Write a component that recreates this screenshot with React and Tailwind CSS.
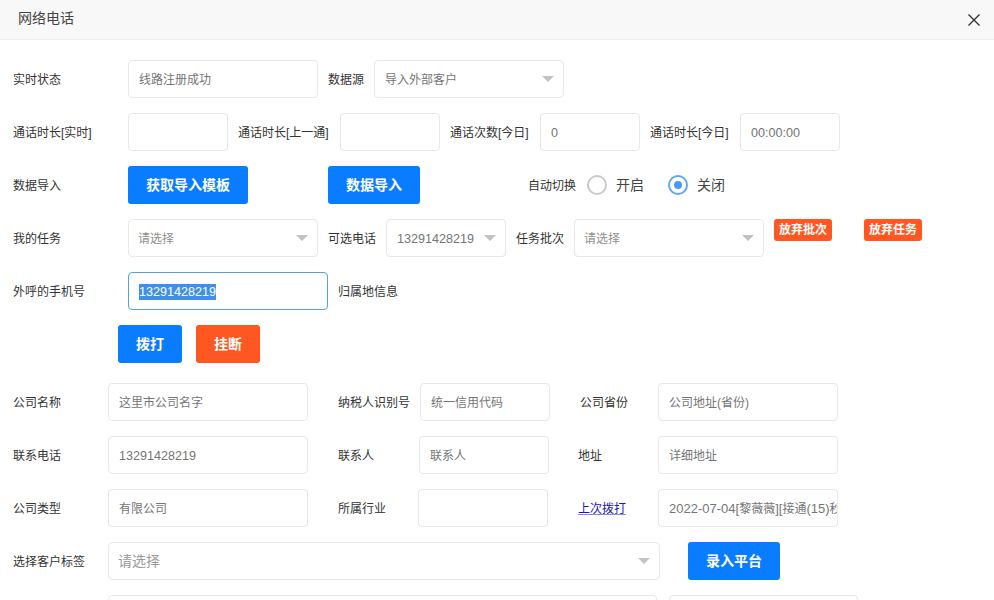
const font = "[font-family:'Liberation_Sans','Noto_Sans_CJK_SC',sans-serif]";

function Label({ className = "", children }) {
  return <div className={`h-[38px] shrink-0 text-xs leading-[40px] ${className}`}>{children}</div>;
}

function Field({ className = "", children }) {
  return (
    <div className={`h-[38px] shrink-0 overflow-hidden whitespace-nowrap rounded-[4px] border border-[#e8e8e8] pl-[10px] text-xs leading-[38px] text-[#757575] ${className}`}>
      {children}
    </div>
  );
}

function Digits({ children }) {
  return <span className="text-[12.6px]">{children}</span>;
}

function Select({ className = "", children }) {
  return (
    <div className={`relative h-[38px] shrink-0 rounded-[4px] border border-[#e8e8e8] ${className}`}>
      {children}
      <span className="absolute right-[9px] top-[15px] h-0 w-0 border-x-[6px] border-t-[6px] border-x-transparent border-t-[#c2c2c2]" />
    </div>
  );
}

function Button({ className = "", children }) {
  return (
    <div className={`flex h-[38px] shrink-0 items-center justify-center rounded-[3px] text-sm font-bold text-white ${className}`}>
      {children}
    </div>
  );
}

function Badge({ className = "", children }) {
  return (
    <div className={`flex h-[22px] w-[58px] shrink-0 items-center justify-center rounded-[3px] bg-[#ff5722] text-xs font-bold text-white ${className}`}>
      {children}
    </div>
  );
}

function Radio({ checked, children, className = "" }) {
  return (
    <div className={`flex shrink-0 items-center ${className}`}>
      <span className={`flex h-5 w-5 items-center justify-center rounded-full border-2 ${checked ? "border-[#5fa8f5]" : "border-[#c9c9c9]"}`}>
        {checked && <span className="h-2 w-2 rounded-full bg-[#4a9bf5]" />}
      </span>
      <span className="ml-[9px] text-sm text-[#444]">{children}</span>
    </div>
  );
}

export default function App() {
  return (
    <div className={`h-[600px] w-[994px] overflow-hidden bg-white text-[#333] ${font}`}>
      <header className="flex h-10 items-center justify-between border-b border-[#eee] bg-[#f8f8f8] pl-[18px] pr-[13px]">
        <span className="pb-[3px] text-sm text-[#444]">网络电话</span>
        <svg width="14" height="14" viewBox="0 0 14 14" fill="none" stroke="#333" strokeWidth="1.4">
          <path d="M1.5 1.5 12.5 12.5M12.5 1.5 1.5 12.5" />
        </svg>
      </header>

      <div className="flex flex-col gap-[15px] pl-[13px] pt-5">
        <div className="flex">
          <Label className="w-[115px]">实时状态</Label>
          <Field className="w-[190px]">线路注册成功</Field>
          <Label className="ml-[10px] w-[46px]">数据源</Label>
          <Select className="w-[190px] pl-[10px] text-xs leading-[38px] text-[#757575]">导入外部客户</Select>
        </div>

        <div className="flex">
          <Label className="w-[115px]">通话时长[实时]</Label>
          <Field className="w-[100px]" />
          <Label className="ml-[10px] w-[102px]">通话时长[上一通]</Label>
          <Field className="w-[100px]" />
          <Label className="ml-[10px] w-[90px]">通话次数[今日]</Label>
          <Field className="w-[100px]"><Digits>0</Digits></Field>
          <Label className="ml-[10px] w-[90px]">通话时长[今日]</Label>
          <Field className="w-[100px]"><Digits>00:00:00</Digits></Field>
        </div>

        <div className="flex">
          <Label className="w-[115px]">数据导入</Label>
          <Button className="w-[120px] bg-[#0a7cff]">获取导入模板</Button>
          <Button className="ml-20 w-[92px] bg-[#0a7cff]">数据导入</Button>
          <Label className="ml-[108px] w-[59px]">自动切换</Label>
          <Radio className="w-[81px]">开启</Radio>
          <Radio checked>关闭</Radio>
        </div>

        <div className="flex">
          <Label className="w-[115px]">我的任务</Label>
          <Select className="w-[190px] pl-[9px] text-xs leading-[38px] text-[#8f8f8f]">请选择</Select>
          <Label className="ml-[10px] w-[48px]">可选电话</Label>
          <Select className="ml-[10px] w-[120px] pl-[10px] text-xs leading-[38px] text-[#757575]"><Digits>13291428219</Digits></Select>
          <Label className="ml-[10px] w-[58px]">任务批次</Label>
          <Select className="w-[190px] pl-[9px] text-xs leading-[38px] text-[#8f8f8f]">请选择</Select>
          <Badge className="ml-[10px]">放弃批次</Badge>
          <Badge className="ml-8">放弃任务</Badge>
        </div>

        <div className="flex">
          <Label className="w-[115px]">外呼的手机号</Label>
          <div className="h-[38px] w-[200px] shrink-0 rounded-[4px] border border-[#5a9fd8] pl-[10px] text-[12.6px] leading-[38px] text-white">
            <span className="bg-[#3f8fe8] py-[1px]">13291428219</span>
          </div>
          <Label className="ml-[10px]">归属地信息</Label>
        </div>

        <div className="ml-[105px] flex gap-[14px]">
          <Button className="w-16 bg-[#0a7cff]">拨打</Button>
          <Button className="w-16 bg-[#ff5722]">挂断</Button>
        </div>

        <div className="mt-[5px] flex">
          <Label className="w-[95px]">公司名称</Label>
          <Field className="w-[200px]">这里市公司名字</Field>
          <Label className="ml-[30px] w-[82px]">纳税人识别号</Label>
          <Field className="w-[130px]">统一信用代码</Field>
          <Label className="ml-[30px] w-[78px]">公司省份</Label>
          <Field className="w-[180px]">公司地址(省份)</Field>
        </div>

        <div className="flex">
          <Label className="w-[95px]">联系电话</Label>
          <Field className="w-[200px]"><Digits>13291428219</Digits></Field>
          <Label className="ml-[30px] w-[81px]">联系人</Label>
          <Field className="w-[130px]">联系人</Field>
          <Label className="ml-[29px] w-[80px]">地址</Label>
          <Field className="w-[180px]">详细地址</Field>
        </div>

        <div className="flex">
          <Label className="w-[95px]">公司类型</Label>
          <Field className="w-[200px]">有限公司</Field>
          <Label className="ml-[30px] w-[80px]">所属行业</Label>
          <Field className="w-[130px]" />
          <Label className="ml-[30px] w-[80px]"><span className="text-[#1a1ab8] underline decoration-[#8a8ae0]">上次拨打</span></Label>
          <Field className="w-[180px]"><span className="text-[13px]">2022-07-04[</span>黎薇薇<span className="text-[13px]">][</span>接通<span className="text-[13px]">(15)</span>秒<span className="text-[13px]">]</span></Field>
        </div>

        <div className="flex">
          <Label className="w-[95px]">选择客户标签</Label>
          <Select className="w-[552px] pl-[9px] text-sm leading-[36px] text-[#9a9a9a]">请选择</Select>
          <Button className="ml-7 w-[92px] bg-[#0a7cff]">录入平台</Button>
        </div>

        <div className="flex">
          <div className="w-[95px] shrink-0" />
          <Field className="w-[549px]" />
          <Field className="ml-3 w-[189px]" />
        </div>
      </div>
    </div>
  );
}
